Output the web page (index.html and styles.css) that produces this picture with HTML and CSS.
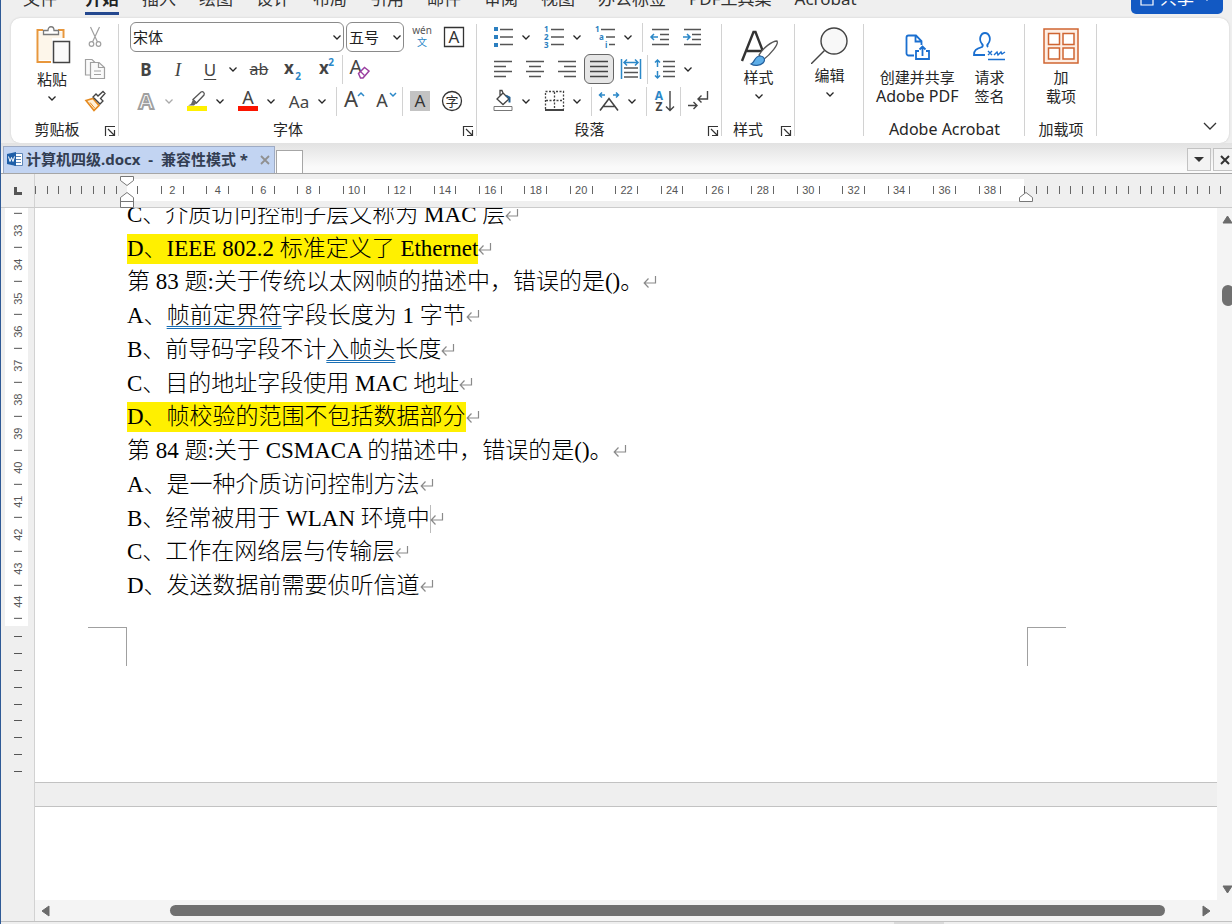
FILE: index.html
```html
<!DOCTYPE html>
<html lang="zh-CN">
<head>
<meta charset="utf-8">
<title>计算机四级.docx</title>
<link rel="stylesheet" href="styles.css">
</head>
<body>
<svg class="defs" aria-hidden="true">
  <symbol id="caret" viewBox="0 0 14 32"><path d="M3.500 14.500 7 18l3.500-3.500" fill="none" stroke="currentColor" stroke-width="1.300"/></symbol>
  <symbol id="launch" viewBox="0 0 12 12"><path d="M1.500 11V1.500H11M4 4l6 6M10.500 5v5.500H5" fill="none" stroke="#333" stroke-width="1.200"/></symbol>
  <symbol id="mark" viewBox="0 0 14 14"><path d="M12.500 1v7H1.500M5.500 3.500 1.200 8l4.300 4.500" fill="none" stroke="#8a8a8a" stroke-width="1.200"/></symbol>
</svg>
<div class="app">
  <nav class="tabs">
    <a href="#">文件</a><a href="#" class="active">开始</a><a href="#">插入</a><a href="#">绘图</a><a href="#">设计</a><a href="#">布局</a><a href="#">引用</a><a href="#">邮件</a><a href="#">审阅</a><a href="#">视图</a><a href="#">办公标签</a><a href="#">PDF工具集</a><a href="#">Acrobat</a>
    <button class="share"><svg width="14" height="16" viewBox="0 0 14 16" fill="none" stroke="#fff" stroke-width="1.200"><path d="M5 3H1v12h12V8M5 10c0-4 3-6 8-6M10 1l3 3-3 3"/></svg>共享<svg width="14" height="32"><use href="#caret"/></svg></button>
  </nav>

  <div class="ribbon">
    <section class="group g-clip">
      <div class="body">
        <button class="big">
          <svg width="38" height="42" viewBox="0 0 38 42" fill="none"><path d="M10 4H4.500v32H18M25 4h5.500v8" stroke="#e8973c" stroke-width="2"/><path d="M6 6h4v3h15V6h4v6H19v22H6z" fill="#fdf6ea"/><path d="M10.500 8.500v-4H15c0-5 6-5 6 0h4.500v4z" stroke="#7a7a7a" stroke-width="1.300" fill="#fff"/><path d="M20.500 15.500h16v21h-16z" fill="#fafafa" stroke="#444" stroke-width="1.500"/></svg>
          <span>粘贴</span><svg class="drop" width="14" height="16" viewBox="0 8 14 16"><use href="#caret" width="14" height="32"/></svg>
        </button>
        <div class="col">
          <button class="i" aria-label="剪切"><svg viewBox="0 0 32 32" fill="none" stroke="#a0a0a0" stroke-width="1.200"><path d="M11.500 6 18.500 21M20.500 6 13.500 21"/><circle cx="12.500" cy="23" r="2.300"/><circle cx="19.500" cy="23" r="2.300"/></svg></button>
          <button class="i" aria-label="复制"><svg viewBox="0 0 32 32" fill="#fafafa" stroke="#a0a0a0" stroke-width="1.200"><path d="M15 22H6.500V6.500H13l3 3"/><path d="M11.500 9.500H20l5.500 5v11h-14z"/><path d="M19.500 9.500v5h6M15 18h7M15 21.500h7" fill="none"/></svg></button>
          <button class="i" aria-label="格式刷"><svg viewBox="0 0 32 32" fill="none"><path d="M7 15.500l7-2 6 7-5 5z" fill="#fff0d8" stroke="#e58a1f" stroke-width="1.700"/><path d="M11 17.500l5 6" stroke="#e58a1f"/><path d="M14 12l7 7 3-3-2.500-2.500 4.500-5-2-2-5 4.500L17 9z" fill="#fff" stroke="#444" stroke-width="1.300"/></svg></button>
        </div>
      </div>
      <footer><span>剪贴板</span><button class="launch" aria-label="剪贴板设置"><svg><use href="#launch"/></svg></button></footer>
    </section>

    <section class="group g-font">
      <div class="body rows">
        <div class="row">
          <label class="combo wide"><select aria-label="字体"><option>宋体</option></select><svg><use href="#caret"/></svg></label>
          <label class="combo"><select aria-label="字号"><option>五号</option></select><svg><use href="#caret"/></svg></label>
          <button class="i" aria-label="拼音指南"><svg viewBox="0 0 32 32"><text x="16" y="13" font-size="10" fill="#555" text-anchor="middle">wén</text><text x="16" y="25" font-size="10" fill="#2b88c8" text-anchor="middle">文</text></svg></button>
          <button class="i" aria-label="字符边框"><svg viewBox="0 0 32 32"><path d="M6.500 6.500h19v19h-19z" fill="none" stroke="#333" stroke-width="1.300"/><text x="16" y="22" font-size="17" fill="#333" text-anchor="middle">A</text></svg></button>
        </div>
        <div class="row">
          <button class="i" aria-label="加粗"><b>B</b></button><button class="i ital" aria-label="倾斜">I</button><button class="i und" aria-label="下划线">U</button><button class="c" aria-label="下划线选项"><svg><use href="#caret"/></svg></button>
          <button class="i strike" aria-label="删除线">ab</button>
          <button class="i" aria-label="下标"><svg viewBox="0 0 32 32"><text x="11" y="21" font-size="17" font-weight="700" fill="#444" text-anchor="middle">x</text><text x="20" y="27" font-size="10" font-weight="700" fill="#2b88c8" text-anchor="middle">2</text></svg></button>
          <button class="i" aria-label="上标"><svg viewBox="0 0 32 32"><text x="14" y="21" font-size="17" font-weight="700" fill="#444" text-anchor="middle">x</text><text x="21" y="13" font-size="10" font-weight="700" fill="#2b88c8" text-anchor="middle">2</text></svg></button>
          <i class="sep"></i>
          <button class="i" aria-label="清除格式"><svg viewBox="0 0 32 32"><text x="12" y="21" font-size="20" fill="#444" text-anchor="middle">A</text><path d="M14.500 20.500l6-6 4.500 3.500-6 7h-2.500z" fill="#fff" stroke="#9b3fa0" stroke-width="1.500"/><path d="M16.500 18.500l4 4" stroke="#9b3fa0" stroke-width="1.300"/></svg></button>
        </div>
        <div class="row">
          <div class="split"><button class="i" aria-label="文本效果"><svg viewBox="0 0 32 32"><text x="16" y="24" font-size="22" font-weight="700" fill="#fff" stroke="#a0a0a0" stroke-width="1.800" text-anchor="middle">A</text></svg></button><button class="c dim" aria-label="文本效果选项"><svg><use href="#caret"/></svg></button></div>
          <div class="split"><button class="i" aria-label="突出显示"><svg viewBox="0 0 32 32"><path d="M6 21h20v5H6z" fill="#fff000"/><path d="M12 14.500l8-7.500c2-1 4 1 3 3l-7.500 8z" fill="#fff" stroke="#555" stroke-width="1.300"/><path d="M12 14.500l-2 4.500-3 1.500h6l2.500-2.500z" fill="#666"/></svg></button><button class="c" aria-label="突出显示选项"><svg><use href="#caret"/></svg></button></div>
          <div class="split"><button class="i" aria-label="字体颜色"><svg viewBox="0 0 32 32"><text x="16" y="19" font-size="18" fill="#444" text-anchor="middle">A</text><path d="M6 21h20v5H6z" fill="#fb1400"/></svg></button><button class="c" aria-label="字体颜色选项"><svg><use href="#caret"/></svg></button></div>
          <div class="split"><button class="i" aria-label="更改大小写">Aa</button><button class="c" aria-label="大小写选项"><svg><use href="#caret"/></svg></button></div>
          <i class="sep"></i>
          <button class="i" aria-label="增大字号"><svg viewBox="0 0 32 32"><text x="13" y="22" font-size="22" fill="#444" text-anchor="middle">A</text><path d="M20 11l3-3 3 3" fill="none" stroke="#2b88c8" stroke-width="1.500"/></svg></button>
          <button class="i" aria-label="减小字号"><svg viewBox="0 0 32 32"><text x="12" y="22" font-size="18" fill="#444" text-anchor="middle">A</text><path d="M20 8l3 3 3-3" fill="none" stroke="#2b88c8" stroke-width="1.500"/></svg></button>
          <i class="sep"></i>
          <button class="i" aria-label="字符底纹"><svg viewBox="0 0 32 32"><path d="M6 6h20v20H6z" fill="#c3c3c3"/><text x="16" y="22" font-size="17" fill="#333" text-anchor="middle">A</text></svg></button>
          <button class="i" aria-label="带圈字符"><svg viewBox="0 0 32 32"><circle cx="16" cy="16" r="9.500" fill="none" stroke="#333" stroke-width="1.300"/><text x="16" y="21" font-size="13" fill="#333" text-anchor="middle">字</text></svg></button>
        </div>
      </div>
      <footer><span>字体</span><button class="launch" aria-label="字体设置"><svg><use href="#launch"/></svg></button></footer>
    </section>

    <section class="group g-para">
      <div class="body rows">
        <div class="row">
          <div class="split"><button class="i" aria-label="项目符号"><svg viewBox="0 0 32 32"><path d="M7 6h4v4H7zM7 14h4v4H7zM7 22h4v4H7z" fill="#2b7fc0"/><path d="M13 8.500h13M13 16h13M13 23.500h13" stroke="#555" stroke-width="1.500"/></svg></button><button class="c" aria-label="项目符号选项"><svg><use href="#caret"/></svg></button></div>
          <div class="split"><button class="i" aria-label="编号"><svg viewBox="0 0 32 32"><g font-size="8" font-weight="700" fill="#2b7fc0"><text x="6" y="11">1</text><text x="6" y="19">2</text><text x="6" y="27">3</text></g><path d="M13 8.500h13M13 16h13M13 23.500h13" stroke="#555" stroke-width="1.500"/></svg></button><button class="c" aria-label="编号选项"><svg><use href="#caret"/></svg></button></div>
          <div class="split"><button class="i" aria-label="多级列表"><svg viewBox="0 0 32 32"><g font-size="8" font-weight="700" fill="#2b7fc0"><text x="6" y="11">1</text><text x="10" y="19">a</text><text x="16" y="27">i</text></g><path d="M12 8.500h14M17 16h9M20 23.500h6" stroke="#555" stroke-width="1.500"/></svg></button><button class="c" aria-label="多级列表选项"><svg><use href="#caret"/></svg></button></div>
          <i class="sep"></i>
          <button class="i" aria-label="减少缩进"><svg viewBox="0 0 32 32" fill="none" stroke="#555" stroke-width="1.500"><path d="M8 8.500h17M16 13.500h9M16 18.500h9M8 23.500h17"/><path d="M14 16H7M10 13l-3 3 3 3" stroke="#2b88c8"/></svg></button>
          <button class="i" aria-label="增加缩进"><svg viewBox="0 0 32 32" fill="none" stroke="#555" stroke-width="1.500"><path d="M8 8.500h17M16 13.500h9M16 18.500h9M8 23.500h17"/><path d="M7 16h7M11 13l3 3-3 3" stroke="#2b88c8"/></svg></button>
        </div>
        <div class="row">
          <button class="i" aria-label="左对齐"><svg viewBox="0 0 32 32"><path d="M7 8.500h18M7 13.500h12M7 18.500h18M7 23.500h12" stroke="#555" stroke-width="1.500"/></svg></button>
          <button class="i" aria-label="居中"><svg viewBox="0 0 32 32"><path d="M7 8.500h18M10 13.500h12M7 18.500h18M10 23.500h12" stroke="#555" stroke-width="1.500"/></svg></button>
          <button class="i" aria-label="右对齐"><svg viewBox="0 0 32 32"><path d="M7 8.500h18M13 13.500h12M7 18.500h18M13 23.500h12" stroke="#555" stroke-width="1.500"/></svg></button>
          <button class="i on" aria-label="两端对齐"><svg viewBox="0 0 32 32"><path d="M7 8.500h18M7 13.500h18M7 18.500h18M7 23.500h18" stroke="#444" stroke-width="1.500"/></svg></button>
          <button class="i" aria-label="分散对齐"><svg viewBox="0 0 32 32" fill="none" stroke="#2b88c8" stroke-width="1.500"><path d="M6.500 6v20M25.500 6v20M9 9.500h14M12 6.500l-3 3 3 3M20 6.500l3 3-3 3"/><path d="M9 15h14M9 19.500h14M9 24h14" stroke="#555"/></svg></button>
          <i class="sep"></i>
          <button class="i" aria-label="行距"><svg viewBox="0 0 32 32" fill="none" stroke="#555" stroke-width="1.500"><path d="M14 8.500h12M14 13.500h12M14 18.500h12M14 23.500h12"/><path d="M8.500 7v7M6 9.500l2.500-2.500 2.500 2.500M8.500 18v7M6 22.500l2.500 2.500 2.500-2.500" stroke="#2b88c8"/></svg></button><button class="c" aria-label="行距选项"><svg><use href="#caret"/></svg></button>
        </div>
        <div class="row">
          <div class="split"><button class="i" aria-label="底纹"><svg viewBox="0 0 32 32" fill="none" stroke="#444" stroke-width="1.300"><path d="M7 21.500h18v4H7z" stroke="#777" stroke-width="1"/><path d="M10 14l6-6 6 6-6 5.500zM16 8l-1-2.500h-2V11"/><path d="M19 10.500l3.500 2v5" stroke="#245f8e" stroke-width="2"/></svg></button><button class="c" aria-label="底纹选项"><svg><use href="#caret"/></svg></button></div>
          <div class="split"><button class="i" aria-label="边框"><svg viewBox="0 0 32 32" fill="none" stroke="#444" stroke-width="1.300"><path d="M7.500 24V6.500h18V24M16.500 7v17M8 15.500h17" stroke-dasharray="2 1.500"/><path d="M7 25h19" stroke-width="2"/></svg></button><button class="c" aria-label="边框选项"><svg><use href="#caret"/></svg></button></div>
          <i class="sep"></i>
          <div class="split"><button class="i" aria-label="中文版式"><svg viewBox="0 0 32 32" fill="none"><path d="M7 25.500l9-12 9 12M10.500 21.500h11" stroke="#444" stroke-width="1.600"/><path d="M12 10H6.500M9 7.500L6.500 10 9 12.500M20 10h5.500M23 7.500l2.500 2.500-2.500 2.500" stroke="#2b88c8" stroke-width="1.500"/></svg></button><button class="c" aria-label="中文版式选项"><svg><use href="#caret"/></svg></button></div>
          <i class="sep"></i>
          <button class="i" aria-label="排序"><svg viewBox="0 0 32 32"><text x="11" y="15" font-size="12" font-weight="700" fill="#2b88c8" text-anchor="middle">A</text><text x="11" y="26" font-size="12" font-weight="700" fill="#444" text-anchor="middle">Z</text><path d="M22 6v19M18 21.500l4 4 4-4" fill="none" stroke="#444" stroke-width="1.400"/></svg></button>
          <i class="sep"></i>
          <button class="i" aria-label="显示编辑标记"><svg viewBox="0 0 32 32" fill="none" stroke="#444" stroke-width="1.400"><path d="M25.500 6v8H16M19.500 10.500L16 14l3.500 3.500M6 20.500h9M11.500 17l3.500 3.500-3.500 3.500"/></svg></button>
        </div>
      </div>
      <footer><span>段落</span><button class="launch" aria-label="段落设置"><svg><use href="#launch"/></svg></button></footer>
    </section>

    <section class="group g-style">
      <div class="body"><button class="big">
        <svg width="38" height="40" viewBox="0 0 38 40" fill="none"><path d="M2 35 13.500 6h2L24 28M7 25h14.500" stroke="#333" stroke-width="2.400"/><path d="M19 29C23 22 32 15 37 15c2 3-6 13-14 19z" fill="#fff" stroke="#555" stroke-width="1.300"/><path d="M11 38c4-1 3-8 9-8 4 0 6 4 3 7-3 3-9 3-12 1z" fill="#5eaee8" stroke="#245f9b" stroke-width="1.200"/></svg>
        <span>样式</span><svg class="drop" width="14" height="16" viewBox="0 8 14 16"><use href="#caret" width="14" height="32"/></svg></button></div>
      <footer><span>样式</span><button class="launch" aria-label="样式设置"><svg><use href="#launch"/></svg></button></footer>
    </section>

    <section class="group g-edit">
      <div class="body"><button class="big">
        <svg width="38" height="38" viewBox="0 0 38 38" fill="#f8f8f8" stroke="#444" stroke-width="1.400"><circle cx="23" cy="15" r="13"/><path d="M13.500 24.500 0 38"/></svg>
        <span>编辑</span><svg class="drop" width="14" height="16" viewBox="0 8 14 16"><use href="#caret" width="14" height="32"/></svg></button></div>
      <footer></footer>
    </section>

    <section class="group g-acro">
      <div class="body">
        <button class="big"><svg width="38" height="40" viewBox="0 0 38 40" fill="none" stroke="#1a6fd0" stroke-width="1.800"><path d="M16 29.500H10.500c-1 0-2-1-2-2v-16c0-1 1-2 2-2H18l5.500 5.500v4M17.500 9.500v6h6"/><path d="M21 25h-3v8h13v-8h-3M24.500 30v-9M21.500 23.500l3-3 3 3"/></svg><span>创建并共享<br><span class="latin">Adobe PDF</span></span></button>
        <button class="big"><svg width="38" height="40" viewBox="0 0 38 40" fill="none" stroke="#1a6fd0" stroke-width="1.800"><path d="M15 29H4c0-5 2-6 8-8 1-1 1-2 0-3-4-5-1-11 3-11s7 6 3 11c-1 1-1 2 0 3"/><path d="M18 25l4 4M22 25l-4 4M24 29l3-3 1 3 3-3 1 2 3-2M18 33.500h17" stroke-width="1.400"/></svg><span>请求<br>签名</span></button>
      </div>
      <footer><span class="latin">Adobe Acrobat</span></footer>
    </section>

    <section class="group g-add">
      <div class="body"><button class="big"><svg width="38" height="40" viewBox="0 0 38 40" fill="none" stroke="#cf6532" stroke-width="1.500"><path d="M2 3h34v34H2z" fill="#fdeee4"/><path d="M6.500 7.500h11v11h-11zM21 7.500h11v11H21zM6.500 22h11v11h-11zM21 22h11v11H21z" fill="#fff"/></svg><span>加<br>载项</span></button></div>
      <footer><span>加载项</span></footer>
    </section>
    <button class="collapse" aria-label="折叠功能区"><svg width="14" height="8" viewBox="0 0 14 8"><path d="M1 1l6 6 6-6" fill="none" stroke="#333" stroke-width="1.300"/></svg></button>
  </div>

  <div class="docbar">
    <div class="doctab">
      <svg width="16" height="16" viewBox="0 0 16 16"><path d="M7.500 2.500h8v12h-8z" fill="#fff" stroke="#5f87b8"/><path d="M9 5.500h5M9 8.500h5M9 11.500h5" stroke="#5f87b8"/><path d="M0 3l9-2v14l-9-2z" fill="#1f5fa8"/><path d="M1.500 5.500l1.500 5 1.500-4 1.500 4 1.500-5" fill="none" stroke="#fff"/></svg>
      <span>计算机四级.docx&nbsp; -&nbsp; 兼容性模式 *</span>
      <button aria-label="关闭标签"><svg width="10" height="10" viewBox="0 0 10 10"><path d="M1 1l8 8M9 1L1 9" stroke="#909090" stroke-width="1.800"/></svg></button>
    </div>
    <button class="newtab" aria-label="新建标签"></button>
    <div class="docbtns">
      <button aria-label="标签列表"><svg width="10" height="6"><path d="M0 0h10L5 5z" fill="#333"/></svg></button>
      <button aria-label="关闭"><svg width="10" height="10" viewBox="0 0 10 10"><path d="M1 1l8 8M9 1L1 9" stroke="#333" stroke-width="2"/></svg></button>
    </div>
  </div>

  <div class="hruler">
    <div class="corner"><svg width="8" height="8"><path d="M1.500 0v6.500H8" fill="none" stroke="#555" stroke-width="3"/></svg></div>
    <div class="ticks left"><i></i><i></i><i></i><i></i><i></i><i></i><i></i><i></i></div>
    <div class="scale"><i></i><span>2</span><span>4</span><span>6</span><span>8</span><span>10</span><span>12</span><span>14</span><span>16</span><span>18</span><span>20</span><span>22</span><span>24</span><span>26</span><span>28</span><span>30</span><span>32</span><span>34</span><span>36</span><span>38</span>
      <svg class="ind start" width="14" height="34" viewBox="0 0 14 34" fill="#fff" stroke="#777"><path d="M.5 2.500h13v4L7 11.500l-6.500-5zM.5 33.500v-10L7 18.500l6.500 5v10zM.5 27.500h13"/></svg>
      <svg class="ind end" width="14" height="34" viewBox="0 0 14 34" fill="#fff" stroke="#777"><path d="M.5 27.500v-4L7 18.500l6.500 5v4z"/></svg>
    </div>
    <div class="ticks right"><i></i><i></i><i></i><i></i><i></i><i></i><i></i><i></i><i></i><i></i><i></i><i></i><i></i><i></i><i></i><i></i><i></i><i></i></div>
  </div>

  <div class="work">
    <div class="vruler">
      <div class="vscale"><span>33</span><span>34</span><span>35</span><span>36</span><span>37</span><span>38</span><span>39</span><span>40</span><span>41</span><span>42</span><span>43</span><span>44</span></div>
      <div class="vticks"><i></i><i></i><i></i><i></i><i></i><i></i><i></i><i></i><i></i></div>
    </div>
    <div class="view">
      <div class="pages">
        <article class="page">
          <div class="text">
            <p>C、介质访问控制子层又称为 MAC 层<svg><use href="#mark"/></svg></p>
            <p><mark>D、IEEE 802.2 标准定义了 Ethernet</mark><svg><use href="#mark"/></svg></p>
            <p>第 83 题:关于传统以太网帧的描述中，错误的是()。<svg><use href="#mark"/></svg></p>
            <p>A、<u>帧前定界符</u>字段长度为 1 字节<svg><use href="#mark"/></svg></p>
            <p>B、前导码字段不计<u>入帧头</u>长度<svg><use href="#mark"/></svg></p>
            <p>C、目的地址字段使用 MAC 地址<svg><use href="#mark"/></svg></p>
            <p><mark>D、帧校验的范围不包括数据部分</mark><svg><use href="#mark"/></svg></p>
            <p>第 84 题:关于 CSMACA 的描述中，错误的是()。<svg><use href="#mark"/></svg></p>
            <p>A、是一种介质访问控制方法<svg><use href="#mark"/></svg></p>
            <p>B、经常被用于 WLAN 环境中<span class="cursor"></span><svg><use href="#mark"/></svg></p>
            <p>C、工作在网络层与传输层<svg><use href="#mark"/></svg></p>
            <p>D、发送数据前需要侦听信道<svg><use href="#mark"/></svg></p>
          </div>
          <div class="crops"><i class="cl"></i><i class="cr"></i></div>
        </article>
        <article class="page next"></article>
      </div>
      <div class="hscroll">
        <svg width="9" height="12"><path d="M8 1v10L1 6z" fill="#6b6b6b" stroke="#6b6b6b" stroke-linejoin="round"/></svg>
        <div class="thumb"></div>
        <svg width="9" height="12"><path d="M1 1v10l7-5z" fill="#6b6b6b" stroke="#6b6b6b" stroke-linejoin="round"/></svg>
      </div>
    </div>
    <div class="vscroll">
      <svg width="11" height="9"><path d="M5.500 1L10 8H1z" fill="#6b6b6b" stroke="#6b6b6b" stroke-linejoin="round"/></svg>
      <div class="thumb"></div>
      <svg width="11" height="9"><path d="M5.500 8L10 1H1z" fill="#6b6b6b" stroke="#6b6b6b" stroke-linejoin="round"/></svg>
    </div>
  </div>
  <div class="status"><i></i></div>
</div>
</body>
</html>
```
FILE: styles.css
```css
* { box-sizing: border-box; }
body {
  margin: 0;
  background: #efefef;
  color: #262626;
  font: 15px/19px "Noto Sans", "Noto Sans CJK SC", sans-serif;
  overflow: hidden;
}
button {
  border: 0;
  padding: 0;
  background: none;
  font: inherit;
  color: inherit;
}
.defs { position: absolute; width: 0; height: 0; }
.app {
  display: flex;
  flex-direction: column;
  height: 100vh;
  overflow: hidden;
  border-left: 1px solid #2f5a96;
}

/* Menu tabs */
.tabs {
  display: flex;
  flex: none;
  height: 36px;
  margin-top: -18px;
  padding: 0 9px 0 22px;
  gap: 23px;
  font-size: 17px;
  line-height: 34px;
  white-space: nowrap;
}
.tabs a { color: #333; text-decoration: none; height: 33px; }
.tabs .active { margin-left: 5px; font-weight: 700; color: #222; border-bottom: 3px solid #24488f; }
.share {
  display: flex;
  align-items: center;
  justify-content: center;
  gap: 6px;
  width: 92px;
  height: 32px;
  margin-left: auto;
  border-radius: 5px;
  background: #1259c3;
  color: #fff;
}

/* Ribbon */
.ribbon {
  display: flex;
  flex: none;
  height: 125px;
  margin: 0 3px 0 10px;
  padding-top: 3px;
  border-radius: 9px;
  background: #fff;
  box-shadow: 0 0 2px #c4c4c4;
}
.group {
  position: relative;
  display: flex;
  flex: none;
  flex-direction: column;
}
.group::after {
  content: "";
  position: absolute;
  right: 0;
  top: 3px;
  height: 112px;
  border-right: 1px solid #d2d2d2;
}
.body { display: flex; height: 96px; }
.rows, .col { display: flex; flex-direction: column; }
.row { display: flex; height: 32px; align-items: center; }
.group footer {
  display: flex;
  align-items: center;
  justify-content: center;
  height: 24px;
  padding: 0 20px;
  white-space: nowrap;
}
.latin { font-size: 16px; }
.launch { position: absolute; right: 3px; bottom: 6px; width: 12px; height: 12px; }
.launch svg { display: block; width: 12px; height: 12px; }
.i { display: block; flex: none; width: 32px; height: 32px; color: #444; font-size: 17px; }
.i svg { display: block; width: 32px; height: 32px; }
.c { flex: none; width: 14px; height: 32px; }
.c svg, .combo svg { display: block; width: 14px; height: 32px; }
.dim { color: #aaa; }
.split { display: flex; margin-right: 5px; }
.sep { flex: none; width: 1px; height: 29px; margin-right: 1px; background: #d2d2d2; }
.split + .sep { margin-left: 2px; }
.big {
  display: flex;
  flex-direction: column;
  align-items: center;
  justify-content: flex-start;
  padding-top: 5px;
  white-space: nowrap;
}
.big > svg { flex: none; }
.big > span { margin-top: 2px; }
.drop { margin-top: 1px; }
.ital { font-family: "Liberation Serif", serif; font-style: italic; font-size: 19px; }
.und { text-decoration: underline; text-underline-offset: 3px; }
.strike { width: 38px; font-size: 16px; text-decoration: line-through; }
.i.on { width: 30px; height: 30px; margin: 0 1px; border: 1px solid #666; border-radius: 6px; background: #e6e6e6; }
.i.on svg { margin: -2px; }
.combo { position: relative; width: 58px; height: 30px; margin-right: 2px; }
.combo.wide { width: 214px; }
.combo select {
  appearance: none;
  width: 100%;
  height: 30px;
  padding: 0 2px;
  border: 1px solid #8a8a8a;
  border-radius: 6px;
  background: #fff;
  color: #222;
  font: inherit;
}
.combo svg { position: absolute; right: 0; top: -1px; pointer-events: none; }

.g-clip { width: 108px; }
.g-clip .body { padding-left: 14px; }
.g-clip .big { width: 54px; }
.g-clip footer { padding: 0 26px 0 10px; }
.g-font { width: 358px; }
.g-font .rows { padding-left: 11px; }
.g-font footer, .g-para footer { padding: 0 38px 0 18px; }
.g-para { width: 245px; }
.g-para .rows { padding-left: 10px; }
.g-style { width: 73px; }
.g-style .big, .g-edit .big, .g-add .big { width: 100%; }
.g-style footer { justify-content: flex-start; padding: 0 11px; }
.g-edit { width: 69px; }
.g-acro { width: 161px; }
.g-acro .body { padding: 0 12px; gap: 12px; }
.g-add { width: 72px; }
.collapse { align-self: flex-end; margin: 0 12px 9px auto; }

/* Document tabs */
.docbar {
  display: flex;
  flex: none;
  align-items: flex-end;
  height: 31px;
  padding-left: 2px;
  border-bottom: 1px solid #a6a6a6;
  background: linear-gradient(#e2e2e2, #fafafa 80%);
}
.doctab {
  display: flex;
  align-items: center;
  gap: 3px;
  width: 272px;
  height: 27px;
  padding: 0 4px 2px 3px;
  border: 1px solid #9eabc4;
  border-bottom: 0;
  background: #c2d4f2;
  color: #333e52;
  font-size: 15px;
  font-weight: 700;
  white-space: nowrap;
}
.doctab button { margin-left: auto; line-height: 10px; }
.newtab { width: 27px; height: 23px; margin-left: 1px; border: 1px solid #a6a6a6; border-bottom: 0; background: #fff; }
.docbtns { display: flex; gap: 2px; margin: 0 -5px 2px auto; }
.docbtns button { display: flex; align-items: center; justify-content: center; width: 24px; height: 23px; border: 1px solid #c2c2c2; background: #f3f3f3; }

/* Horizontal ruler */
.hruler {
  display: flex;
  flex: none;
  align-items: center;
  height: 34px;
  padding-bottom: 2px;
  border-bottom: 1px solid #cbcbcb;
  font: 11px/8px "Liberation Sans", sans-serif;
  color: #555;
}
.corner { display: flex; width: 34px; height: 33px; margin-bottom: -2px; align-items: center; justify-content: center; border-right: 1px solid #d2d2d2; }
.ticks { display: grid; grid-auto-flow: column; grid-auto-columns: 1fr; }
.ticks i { height: 8px; border-left: 1px solid #666; }
.ticks.left { width: 92px; }
.ticks.right { width: 208px; }
.scale {
  position: relative;
  flex: 1;
  display: grid;
  grid-template-columns: 2fr repeat(19, 4fr) 1fr;
  padding: 7px 0;
  background: #fff;
}
.scale span { display: block; height: 8px; margin: 0 25%; border: solid #666; border-width: 0 1px; text-align: center; }
.scale > i { height: 8px; width: 50%; border-right: 1px solid #666; }
.ind { position: absolute; top: -5px; }
.ind.start { left: -7px; }
.ind.end { right: -9px; }

/* Workspace */
.work { display: flex; flex: 1; min-height: 0; }
.vruler { flex: none; width: 34px; border-right: 1px solid #d2d2d2; padding: 0 6px 0 4px; background: #efefef; color: #555; font: 11px/8px "Liberation Sans", sans-serif; }
.vscale { display: grid; grid-template-columns: 8px; grid-auto-rows: 1fr; height: 418px; padding: 5px 9px 7px; background: #fff; }
.vscale span { display: flex; align-items: center; justify-content: center; writing-mode: vertical-rl; transform: rotate(180deg); border-bottom: 1px solid #555; }
.vscale span:last-child { border-top: 1px solid #555; }
.vticks { display: grid; grid-template-columns: 8px; grid-auto-rows: 1fr; height: 162px; padding: 10px 9px 0; }
.vticks i { border-top: 1px solid #555; }
.view { display: flex; flex: 1; flex-direction: column; min-width: 0; }
.pages { display: flex; flex: 1; flex-direction: column; gap: 23px; min-height: 0; overflow: hidden; }
.page { flex: none; height: 575px; border-bottom: 1px solid #c2c2c2; background: #fff; }
.page.next { flex: 1; border-top: 1px solid #c2c2c2; border-bottom: 0; }
.text {
  display: grid;
  grid-auto-rows: 1fr;
  height: 405px;
  margin: -10px 0 0 92px;
  color: #000;
  font: 23px/30px "Liberation Serif", "Noto Sans CJK SC Light", "Noto Sans CJK SC", serif;
  white-space: nowrap;
}
.text p { display: flex; align-items: center; margin: 0; white-space: pre; }
.text svg { width: 14px; height: 14px; }
.text mark { height: 30px; background: #fff000; color: #000; }
.text u { text-decoration: underline double #1a6fb5 1px; text-underline-offset: 3px; }
.cursor { width: 1px; height: 28px; margin-right: -1px; background: #bbb; }
.crops { display: flex; justify-content: space-between; margin: 24px 151px 0 53px; }
.crops i { width: 39px; height: 39px; border-top: 1px solid #a0a0a0; }
.cl { border-right: 1px solid #a0a0a0; }
.cr { border-left: 1px solid #a0a0a0; }
.hscroll { display: flex; flex: none; align-items: center; height: 21px; padding: 0 6px; background: #f4f4f4; }
.hscroll .thumb { flex: 1; height: 11px; margin: 0 37px 0 120px; border-radius: 6px; background: #707070; }
.vscroll { display: flex; flex: none; flex-direction: column; width: 15px; padding: 7px 0 27px 5px; overflow: hidden; background: #f4f4f4; }
.vscroll svg { flex: none; }
.vscroll .thumb { width: 12px; height: 21px; margin: 61px 0 auto; border-radius: 6px; background: #707070; }
.status { flex: none; height: 3px; border-top: 1px solid #c2c2c2; }
.status i { display: block; width: 50px; height: 2px; margin: 0 288px 0 auto; background: #dadada; }
```
